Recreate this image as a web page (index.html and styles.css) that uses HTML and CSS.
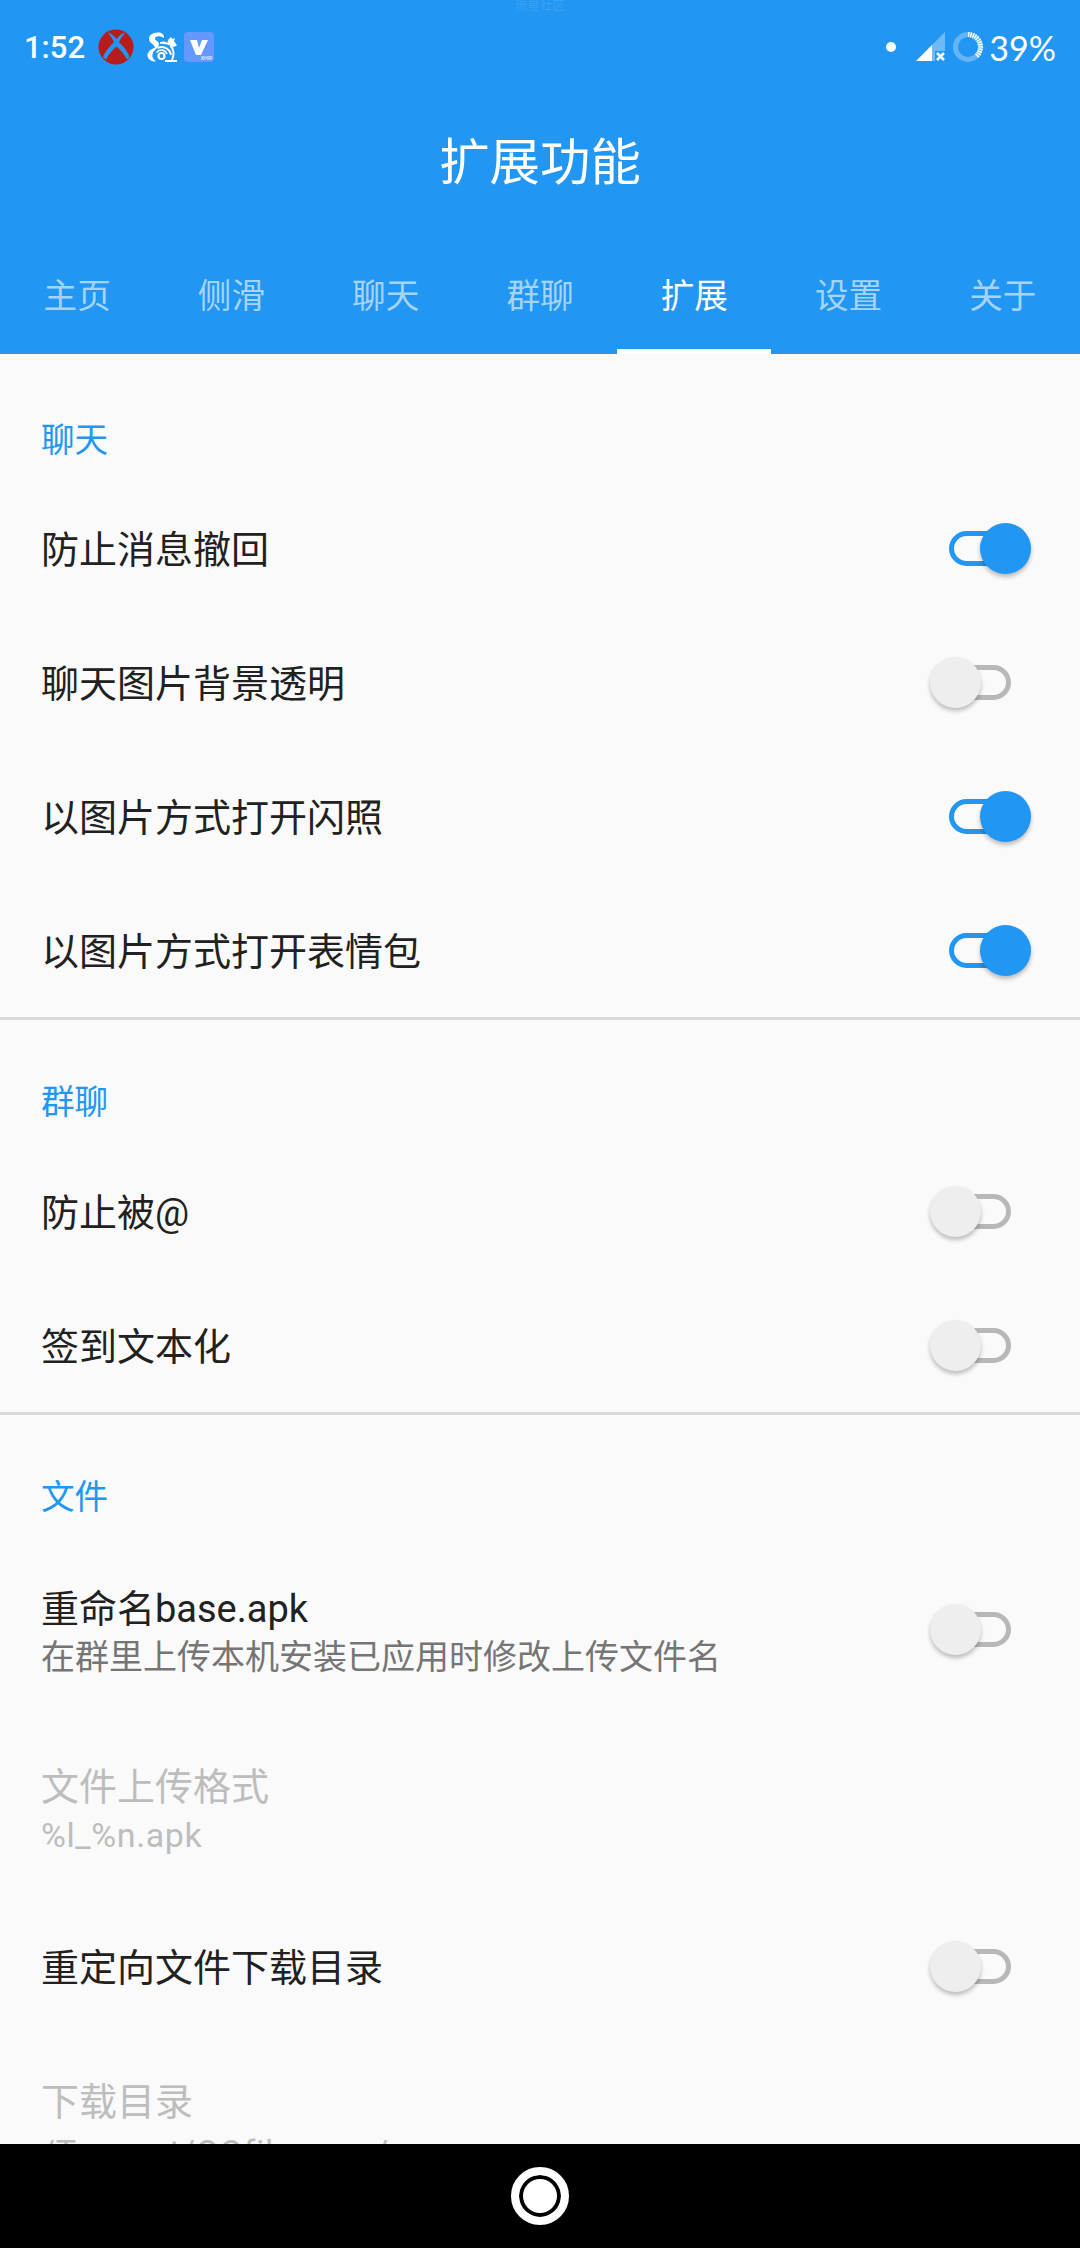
FILE: index.html
```html
<!DOCTYPE html>
<html lang="zh">
<head>
    <meta charset="utf-8">
    <title>扩展功能</title>
    <link rel="stylesheet" href="styles.css">
</head>
<body>
    <header class="appbar">
        <div class="statusbar">
            <span class="clock">1:52</span>
            <svg class="ic-xbox" viewBox="0 0 36 36" width="36" height="36">
                <circle cx="18" cy="18" r="17.5" fill="#b71c1c"/>
                <path d="M9.500 3.500 C13 4 16 7 18.500 10 C21 7 24 4 27.500 3.500 C25 6 22.500 9.500 21 13 C26 18 30 23 31.500 28 L29 30.500 C26 25 22 20.500 18.500 17.500 C15 20.500 11 25 8 30.500 L5 28 C7 23 11 18 16 13 C14.500 9.500 12 6 9.500 3.500 Z" fill="#2196f3"/>
            </svg>
            <svg class="ic-uc" viewBox="0 0 30 30" width="30" height="30">
                <path d="M12 0.500 C6 0 1.500 3 2 7.500 C2.500 11 7 12 8 15.500 C4 17 0 20 0.500 24 C1 27.500 4.500 29.500 9 29.500 C5.500 27 4.500 24 6 20.500 C8 17 12 15.500 12 12 C12 9 8 9 8 6.500 C8 4 13 3.500 17 6 C17.500 3 15 0.500 12 0.500 Z" fill="#fff"/>
                <path d="M13 10 C16 9 19 9.500 20.500 11 L21 8 L24 5 L25.500 7 L28 6 L27 9 L30 13.500 L26.500 15 L24.500 14.500 C23 13.500 21.500 12.500 20 12.500 C17 11.500 15 11.500 13 12 Z" fill="#fff"/>
                <g fill="none" stroke="#fff">
                    <path d="M10.500 16 A9.500 9.500 0 0 1 24 23" stroke-width="2"/>
                    <path d="M9.500 20.500 A6 6 0 0 1 20 22" stroke-width="1.600"/>
                    <circle cx="14.500" cy="24" r="3" stroke-width="2.200"/>
                    <path d="M23.500 14 C27 17 27.500 23 25 28" stroke-width="2"/>
                    <path d="M18 29 L30 29" stroke-width="2"/>
                </g>
            </svg>
            <div class="ic-v">
                <svg viewBox="0 0 30 30" width="30" height="30">
                    <path d="M6 8 L13 8 L15 16 L18 8 L24 8 L17 23 L12 23 Z" fill="#fff"/>
                </svg>
                <span class="ic-v-label">XHIR</span>
            </div>
            <span class="watermark">流星社区</span>
            <span class="status-right">
                <span class="dot"></span>
                <svg class="ic-signal" viewBox="0 0 30 30" width="30" height="30">
                    <path d="M16 13 L29 0 L29 19 L19 19 L19 29 L16 29 Z" fill="#fff" opacity=".35"/>
                    <path d="M0 29 L16 13 L16 29 Z" fill="#fff"/>
                    <path d="M21 21 L28 28 M28 21 L21 28" stroke="#fff" stroke-width="2.500" fill="none"/>
                </svg>
                <svg class="ic-battery" viewBox="0 0 30 30" width="30" height="30">
                    <circle cx="15" cy="15" r="12.500" fill="none" stroke="#fff" stroke-opacity=".3" stroke-width="5"/>
                    <circle cx="15" cy="15" r="12.500" fill="none" stroke="#fff" stroke-width="5" pathLength="100" transform="rotate(-90 15 15)" stroke-dasharray="1.800 1.200 1.800 1.200 1.800 1.200 1.800 1.200 1.800 1.200 1.800 1.200 1.800 1.200 1.800 1.200 1.800 1.200 1.800 1.200 1.800 1.200 1.800 1.200 1.800 100"/>
                </svg>
                <span class="percent">39%</span>
            </span>
        </div>
        <h1 class="title">扩展功能</h1>
        <nav class="tabs">
            <a class="tab">主页</a>
            <a class="tab">侧滑</a>
            <a class="tab">聊天</a>
            <a class="tab">群聊</a>
            <a class="tab active">扩展</a>
            <a class="tab">设置</a>
            <a class="tab">关于</a>
        </nav>
    </header>

    <main class="content">
        <section class="group">
            <h2 class="group-title">聊天</h2>
            <div class="row"><span class="row-title">防止消息撤回</span><span class="switch on"></span></div>
            <div class="row"><span class="row-title">聊天图片背景透明</span><span class="switch"></span></div>
            <div class="row"><span class="row-title">以图片方式打开闪照</span><span class="switch on"></span></div>
            <div class="row"><span class="row-title">以图片方式打开表情包</span><span class="switch on"></span></div>
        </section>
        <section class="group">
            <h2 class="group-title">群聊</h2>
            <div class="row"><span class="row-title">防止被@</span><span class="switch"></span></div>
            <div class="row"><span class="row-title">签到文本化</span><span class="switch"></span></div>
        </section>
        <section class="group">
            <h2 class="group-title">文件</h2>
            <div class="row row-two">
                <div>
                    <div class="row-title">重命名base.apk</div>
                    <div class="row-sub">在群里上传本机安装已应用时修改上传文件名</div>
                </div>
                <span class="switch"></span>
            </div>
            <div class="row row-edit disabled">
                <div>
                    <div class="row-title">文件上传格式</div>
                    <div class="row-sub">%l_%n.apk</div>
                </div>
            </div>
            <div class="row"><span class="row-title">重定向文件下载目录</span><span class="switch"></span></div>
            <div class="row row-edit disabled">
                <div>
                    <div class="row-title">下载目录</div>
                    <div class="row-sub">/Tencent/QQfile_recv/</div>
                </div>
            </div>
        </section>
    </main>

    <footer class="navbar">
        <span class="home"></span>
    </footer>
</body>
</html>
```

FILE: styles.css
```css
* {
    box-sizing: border-box;
}

html, body {
    margin: 0;
    padding: 0;
}

body {
    width: 1080px;
    height: 2248px;
    display: flex;
    flex-direction: column;
    overflow: hidden;
    background: #fafafa;
    font-family: Roboto, "Noto Sans CJK SC", sans-serif;
}

/* header */
.appbar {
    height: 354px;
    flex: none;
    background: #2196f3;
    color: #fff;
    display: flex;
    flex-direction: column;
}

.statusbar {
    height: 72px;
    padding: 22px 24px 0 24px;
    display: flex;
    align-items: center;
    position: relative;
}

.clock {
    font-size: 31px;
    font-weight: 500;
    width: 74px;
}

.ic-uc {
    margin-left: 13px;
}

.ic-v {
    width: 30px;
    height: 30px;
    margin-left: 7px;
    background: #6699ff;
    border-radius: 4px;
    position: relative;
}

.ic-v svg {
    display: block;
}

.ic-v-label {
    position: absolute;
    right: 2px;
    bottom: 0;
    font-size: 5px;
    line-height: 7px;
    color: #fff;
}

.watermark {
    position: absolute;
    left: 515px;
    top: 0;
    font-size: 12.500px;
    line-height: 12px;
    color: rgba(255, 255, 255, .12);
}

.status-right {
    margin-left: auto;
    display: flex;
    align-items: center;
}

.dot {
    width: 10px;
    height: 10px;
    border-radius: 50%;
    background: #fff;
    margin-right: 20px;
}

.ic-battery {
    margin-left: 7px;
}

.percent {
    font-family: Lato, sans-serif;
    font-size: 34px;
    margin-left: 6px;
}

.title {
    margin: 0;
    height: 167px;
    padding-top: 6px;
    display: flex;
    align-items: center;
    justify-content: center;
    font-size: 50.400px;
    font-weight: 400;
}

.tabs {
    height: 115px;
    display: grid;
    grid-template-columns: repeat(7, 1fr);
}

.tab {
    display: flex;
    align-items: center;
    justify-content: center;
    font-size: 33.600px;
    color: rgba(255, 255, 255, .6);
    padding-bottom: 7px;
}

.tab.active {
    color: #fff;
    box-shadow: inset 0 -5px 0 #fff;
}

/* list */
.content {
    flex: 1;
    overflow: hidden;
}

.group {
    border-bottom: 3px solid #d9d9d9;
}

.group:last-child {
    border-bottom: 0;
}

.group-title {
    margin: 0;
    height: 124px;
    padding: 62px 0 0 41px;
    font-size: 33.600px;
    line-height: 42px;
    font-weight: 400;
    color: #2196f3;
}

.group:first-child .group-title {
    height: 127px;
    padding-top: 66px;
}

.row {
    height: 134px;
    padding: 0 69px 0 41px;
    display: flex;
    align-items: center;
    justify-content: space-between;
}

.row-two {
    height: 180px;
}

.row-two .row-title {
    padding-top: 6px;
}

.row-edit {
    height: 180px;
}

.row-edit:last-child {
    height: 184px;
}

.row-edit:last-child .row-sub {
    line-height: 50px;
}

.row-title {
    font-size: 38px;
    line-height: 50px;
    padding-top: 3px;
    color: #212121;
}

.row-sub {
    font-size: 34px;
    line-height: 47px;
    color: #757575;
}

.disabled .row-title,
.disabled .row-sub {
    color: #bdbdbd;
}

.disabled .row-sub {
    letter-spacing: .6px;
}

/* switch */
.switch {
    width: 62px;
    height: 35px;
    flex: none;
    border: 5px solid #b8b8b8;
    border-radius: 18px;
    position: relative;
}

.switch::after {
    content: "";
    position: absolute;
    top: -13px;
    left: -24px;
    width: 51px;
    height: 51px;
    border-radius: 50%;
    background: #eeeeee;
    box-shadow: 0 3px 4px rgba(0, 0, 0, .25);
}

.switch.on {
    border-color: #2196f3;
}

.switch.on::after {
    left: 26px;
    background: #2196f3;
}

/* bottom bar */
.navbar {
    height: 104px;
    flex: none;
    background: #000;
    display: flex;
    align-items: center;
    justify-content: center;
}

.home {
    width: 58px;
    height: 58px;
    border-radius: 50%;
    background: #fff;
    border: 8px solid #fff;
    box-shadow: inset 0 0 0 4px #000;
}
```
